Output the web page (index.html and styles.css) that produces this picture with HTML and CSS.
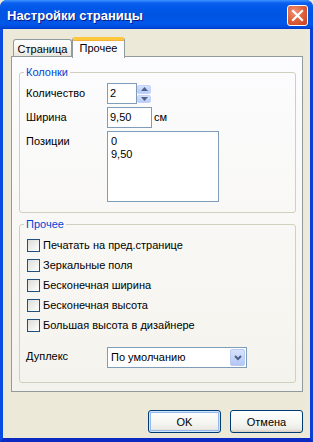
FILE: index.html
```html
<!DOCTYPE html>
<html lang="ru">
<head>
<meta charset="utf-8">
<title>Настройки страницы</title>
<link rel="stylesheet" href="styles.css">
</head>
<body>
<div class="window">
  <div class="titlebar">
    <span class="title">Настройки страницы</span>
    <div class="close">
      <svg width="13" height="13" viewBox="0 0 13 13"><path d="M2 2 L11 11 M11 2 L2 11" stroke="#fff" stroke-width="2.2" stroke-linecap="square"/></svg>
    </div>
  </div>
  <div class="frame">
    <div class="tabs">
      <div class="tab">Страница</div>
      <div class="tab active">Прочее</div>
    </div>
    <div class="panel">
      <fieldset class="group">
        <legend>Колонки</legend>
        <div class="row">
          <span class="lbl">Количество</span>
          <div class="input spin-input">2</div>
          <div class="spin-btns">
            <div class="spin-btn"><svg width="7" height="4" viewBox="0 0 7 4"><path d="M0 4 L3.5 0 L7 4 Z" fill="#4D6185"/></svg></div>
            <div class="spin-btn"><svg width="7" height="4" viewBox="0 0 7 4"><path d="M0 0 L3.5 4 L7 0 Z" fill="#4D6185"/></svg></div>
          </div>
        </div>
        <div class="row">
          <span class="lbl">Ширина</span>
          <div class="input width-input">9,50</div>
          <span class="unit">см</span>
        </div>
        <div class="row">
          <span class="lbl">Позиции</span>
          <div class="listbox">
            <div>0</div>
            <div>9,50</div>
          </div>
        </div>
      </fieldset>
      <fieldset class="group group-other">
        <legend>Прочее</legend>
        <div class="checks">
          <label class="check"><span class="box"></span><span>Печатать на пред.странице</span></label>
          <label class="check"><span class="box"></span><span>Зеркальные поля</span></label>
          <label class="check"><span class="box"></span><span>Бесконечная ширина</span></label>
          <label class="check"><span class="box"></span><span>Бесконечная высота</span></label>
          <label class="check"><span class="box"></span><span>Большая высота в дизайнере</span></label>
        </div>
        <div class="row duplex">
          <span class="lbl">Дуплекс</span>
          <div class="select">
            <span class="select-text">По умолчанию</span>
            <span class="drop"><svg width="8" height="6" viewBox="0 0 8 6"><path d="M1 1 L4 4 L7 1" fill="none" stroke="#4D6185" stroke-width="2"/></svg></span>
          </div>
        </div>
      </fieldset>
    </div>
    <div class="buttons">
      <div class="btn default">OK</div>
      <div class="btn">Отмена</div>
    </div>
  </div>
</div>
</body>
</html>
```
FILE: styles.css
```css
* { box-sizing: border-box; }
html, body { margin: 0; padding: 0; background: #ECE9D8; }
body { font-family: "Liberation Sans", Arial, sans-serif; font-size: 11px; color: #000; }

.window {
  width: 313px;
  height: 442px;
  display: flex;
  flex-direction: column;
  background: #0A48DD;
  border-radius: 7px 7px 0 0;
  overflow: hidden;
}

.titlebar {
  height: 29px;
  flex: none;
  display: flex;
  align-items: center;
  justify-content: space-between;
  padding: 2px 5px 0 7px;
  background: linear-gradient(to bottom, #3D95FF 0px, #0A5FEF 3px, #0058E8 8px, #0054E3 15px, #0057EA 24px, #0046D8 28px, #0036C6 29px);
}
.title {
  color: #fff;
  font-weight: bold;
  font-size: 13px;
  text-shadow: 1px 1px 0 #0A1A85;
  letter-spacing: 0;
}
.close {
  width: 21px;
  height: 21px;
  border: 1px solid #fff;
  border-radius: 3px;
  background: radial-gradient(circle at 35% 30%, #F0937A 0%, #E0643E 45%, #C8401C 100%);
  display: flex;
  align-items: center;
  justify-content: center;
}

.frame {
  flex: 1;
  display: flex;
  flex-direction: column;
  background: #ECE9D8;
  border-left: 3px solid #0A4BE2;
  border-right: 3px solid #0A3FD6;
  border-bottom: 4px solid #0A2AC2;
  padding: 8px 7px 5px 8px;
}

.tabs {
  display: flex;
  align-items: flex-end;
  height: 20px;
  margin-left: 2px;
  flex: none;
}
.tab {
  height: 18px;
  width: 59px;
  border: 1px solid #919B9C;
  border-bottom: none;
  border-radius: 3px 3px 0 0;
  background: linear-gradient(to bottom, #FFFFFF, #F3F3EF 60%, #E6E4DA);
  display: flex;
  align-items: center;
  justify-content: center;
  padding-top: 1px;
}
.tab.active {
  position: relative;
  z-index: 2;
  height: 21px;
  width: 53px;
  margin-bottom: -1px;
  background: #FCFCFE;
  border-top: 3px solid #FFC83C;
  border-left-color: #919B9C;
  box-shadow: inset 0 1px 0 #F5B03A;
  padding-top: 0;
  padding-bottom: 2px;
}

.panel {
  height: 336px;
  margin-top: -1px;
  flex: none;
  border: 1px solid #919B9C;
  background: linear-gradient(to bottom, #FCFCFE, #F6F5F0 80%, #F3F2EC);
  padding: 9px 6px 0 7px;
  display: flex;
  flex-direction: column;
  gap: 5px;
}

.group {
  margin: 0;
  padding: 4px 6px 10px 6px;
  border: 1px solid #D0D0BF;
  border-radius: 3px;
  min-width: 0;
}
.group legend {
  color: #0046D5;
  padding: 0 2px;
  margin-left: -2px;
  line-height: 13px;
}
.group-other { padding-top: 8px; padding-bottom: 14px; }

.row {
  display: flex;
  align-items: flex-start;
  margin-bottom: 3px;
}
.row:last-child { margin-bottom: 0; }
.lbl {
  width: 81px;
  flex: none;
  line-height: 13px;
  padding-top: 4px;
}
.input {
  height: 21px;
  border: 1px solid #7F9DB9;
  background: #fff;
  padding: 0 2px;
  line-height: 19px;
}
.spin-input { width: 30px; }
.spin-btns {
  width: 14px;
  height: 18px;
  margin-top: 2px;
  display: flex;
  flex-direction: column;
  gap: 1px;
}
.spin-btn {
  flex: 1;
  border-radius: 2px;
  background: linear-gradient(to bottom, #D5E1FC, #B6CBF7);
  border: 1px solid #C3D3FD;
  display: flex;
  align-items: center;
  justify-content: center;
}
.width-input { width: 45px; }
.unit { margin-left: 2px; line-height: 21px; }

.listbox {
  width: 112px;
  height: 71px;
  border: 1px solid #7F9DB9;
  background: #fff;
  padding: 3px 3px;
  line-height: 13px;
}

.checks {
  display: flex;
  flex-direction: column;
  gap: 7px;
}
.check {
  display: flex;
  align-items: center;
  height: 13px;
  line-height: 13px;
}
.box {
  width: 13px;
  height: 13px;
  margin-left: 1px;
  margin-right: 3px;
  border: 1px solid #1C5180;
  background: linear-gradient(135deg, #DCDCD7, #FFFFFF);
  flex: none;
}

.duplex { margin-top: 15px; }
.duplex .lbl { padding-top: 3px; }
.select {
  width: 140px;
  height: 21px;
  border: 1px solid #7F9DB9;
  background: #fff;
  display: flex;
  align-items: stretch;
}
.select-text {
  flex: 1;
  line-height: 19px;
  padding-left: 3px;
}
.drop {
  width: 15px;
  margin: 1px;
  border-radius: 2px;
  border: 1px solid #BACCF4;
  background: linear-gradient(to bottom, #D7E3FD, #B3C7F5);
  display: flex;
  align-items: center;
  justify-content: center;
}

.buttons {
  flex: none;
  display: flex;
  justify-content: flex-end;
  gap: 9px;
  margin-top: 18px;
}
.btn {
  width: 73px;
  height: 23px;
  border: 1px solid #003C74;
  border-radius: 3px;
  background: linear-gradient(to bottom, #FFFFFF, #F4F4F0 60%, #ECEBE6 85%, #D6D0C5);
  display: flex;
  align-items: center;
  justify-content: center;
}
.btn.default {
  box-shadow: inset 0 0 0 1px #CEE7FF, inset 0 0 0 2px #98B8EA;
}
```
